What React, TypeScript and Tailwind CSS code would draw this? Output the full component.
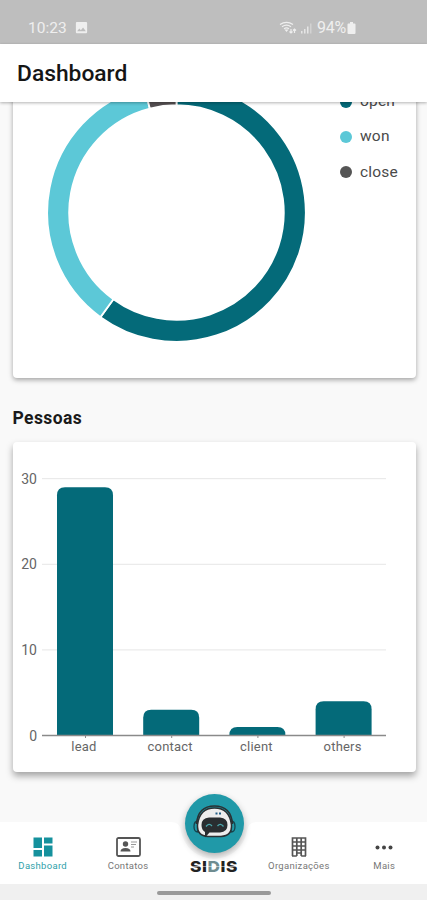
import React from "react";
import { MdImage } from "react-icons/md";

const legend = [
  { label: "open", dot: "bg-[#046a79]" },
  { label: "won", dot: "bg-[#5cc8d7]" },
  { label: "close", dot: "bg-[#555555]" },
];

const slices = [
  { color: "#046a79", from: 0, to: 0.6 },
  { color: "#5cc8d7", from: 0.6, to: 0.96 },
  { color: "#555052", from: 0.96, to: 1 },
];

const people = [
  { label: "lead", value: 29 },
  { label: "contact", value: 3 },
  { label: "client", value: 1 },
  { label: "others", value: 4 },
];

const point = (t: number, r: number) => {
  const a = t * Math.PI * 2;
  return `${129.5 + r * Math.sin(a)} ${129.5 - r * Math.cos(a)}`;
};

const slicePath = (from: number, to: number) => {
  const large = to - from > 0.5 ? 1 : 0;
  return `M${point(from, 129.3)} A129.3 129.3 0 ${large} 1 ${point(to, 129.3)} L${point(to, 107.3)} A107.3 107.3 0 ${large} 0 ${point(from, 107.3)} Z`;
};

const StatusBar = () => (
  <div className="flex h-[44px] shrink-0 items-end justify-between bg-[#bebebe] pr-[71px] pb-[6px] pl-7 text-[#efefef]">
    <div className="flex items-center gap-[7px]">
      <span className="text-[15.5px] leading-5">10:23</span>
      <MdImage size={15} className="-mt-0.5" />
    </div>
    <div className="flex items-center">
      <svg width="18" height="14" viewBox="0 0 18 14" fill="none" stroke="currentColor" strokeWidth="1.2">
        <path d="M1 3.6Q7.500-1 14 3.600M3 5.700Q7.500 2.500 12 5.700M5 7.800Q7.500 6 10 7.800" />
        <path d="M5.500 8.500h4l-2 2.500z" fill="currentColor" stroke="none" />
        <path d="M12 8v4m-1.500-1.500L12 12l1.500-1.500M15.500 12V8M14 9.500 15.500 8 17 9.500" />
      </svg>
      <svg className="ml-[3px]" width="13" height="14" viewBox="0 0 13 14" fill="currentColor">
        <path d="M1 10h1.500v2.500H1zM4 8h1.500v4.500H4zM7 5.500h1.500v7H7z" opacity=".8" />
        <path d="M10 2.500h1.500v10H10z" opacity=".4" />
      </svg>
      <span className="ml-[4px] text-[16px] leading-5 tracking-[-0.2px]">94%</span>
      <svg className="ml-px" width="9" height="13" viewBox="0 0 9 13" fill="currentColor">
        <path d="M3 0h3v1.500h1.500q1 0 1 1V11q0 1-1 1h-6q-1 0-1-1V2.500q0-1 1-1H3z" />
      </svg>
    </div>
  </div>
);

const DonutCard = () => (
  <div className="-mt-[42px] flex h-[318px] w-[403px] shrink-0 rounded-[4px] bg-white pt-[23px] pl-[34px] shadow-[0_2px_5px_rgba(0,0,0,0.35)]">
    <svg width="259" height="259" viewBox="0 0 259 259">
      {slices.map((s) => (
        <path
          key={s.color}
          d={slicePath(s.from, s.to)}
          fill={s.color}
          stroke="#fff"
          strokeWidth="1.8"
        />
      ))}
    </svg>
    <ul className="mt-px ml-[34px] flex flex-col">
      {legend.map((item) => (
        <li key={item.label} className="flex h-[35.300px] items-center gap-2">
          <span className={`size-[12.500px] rounded-full ${item.dot}`}></span>
          <span className="text-[15.500px] tracking-[0.2px] text-[#4a4a4a]">{item.label}</span>
        </li>
      ))}
    </ul>
  </div>
);

const BarCard = () => (
  <div className="mt-[13px] h-[330px] w-[403px] shrink-0 rounded-[4px] bg-white shadow-[0_4px_7px_rgba(0,0,0,0.35)]">
    <svg width="403" height="330" viewBox="0 0 403 330" fontSize="14" fill="#666">
      {[30, 20, 10].map((v) => (
        <g key={v}>
          <path d={`M29 ${293.5 - v * 8.56}H373`} stroke="#e6e6e6" />
          <text x="24" y={298.5 - v * 8.56} textAnchor="end">
            {v}
          </text>
        </g>
      ))}
      <text x="24" y="298.500" textAnchor="end">
        0
      </text>
      {people.map((p, i) => {
        const x = 44 + i * 86.2;
        const top = 293.5 - p.value * 8.56;
        return (
          <g key={p.label}>
            <path
              d={`M${x} 293.500V${top + 8}Q${x} ${top} ${x + 8} ${top}H${x + 48}Q${x + 56} ${top} ${x + 56} ${top + 8}V293.500Z`}
              fill="#046a79"
            />
            <path d={`M${x + 28.5} 294v2`} stroke="#8a8a8a" />
            <text x={x + 27} y="309" textAnchor="middle" fontSize="13" letterSpacing="0.2">
              {p.label}
            </text>
          </g>
        );
      })}
      <path d="M29 293.500H373" stroke="#8a8a8a" strokeWidth="1.300" />
    </svg>
  </div>
);

const DashboardIcon = () => (
  <svg width="20" height="20" viewBox="0 0 20 20" fill="#15919d">
    <path d="M.5.500h8.500v10.500H.500zM11 .5h8.500v6H11zM.500 13H9v6.500H.500zM11 8.500h8.500v11H11z" />
  </svg>
);

const ContactIcon = () => (
  <svg width="25" height="20" viewBox="0 0 25 20" fill="#555">
    <rect x="1" y="1" width="23" height="18" rx="1.500" fill="none" stroke="#555" strokeWidth="1.8" />
    <circle cx="9.500" cy="7" r="2.700" />
    <path d="M4.500 14.500q0-3.500 5-3.500t5 3.500z" />
    <path d="M15 5h6M15 7.500h5M15 10h3" stroke="#999" strokeWidth="1.200" />
  </svg>
);

const BuildingIcon = () => (
  <svg width="16" height="20" viewBox="0 0 16 20" fill="none" stroke="#555" strokeWidth="1.700">
    <path d="M1.500 19V1h13v18M0.800 1h14.400M5.800 1v18M10.200 1v18M1.500 5h13M1.500 9h13M1.500 13h13M1 19h4.800M10.200 19H15M5.800 16h4.400" />
  </svg>
);

const MoreIcon = () => (
  <svg width="18" height="20" viewBox="0 0 18 20" fill="#444">
    <circle cx="2.500" cy="10.500" r="2" />
    <circle cx="9" cy="10.500" r="2" />
    <circle cx="15.500" cy="10.500" r="2" />
  </svg>
);

const NavItem = ({
  icon,
  label,
  active,
}: {
  icon: React.ReactNode;
  label: string;
  active?: boolean;
}) => (
  <button
    className={`flex w-[85.400px] flex-col items-center pt-[15px] ${active ? "text-[#2f9faa]" : "text-[#777]"}`}
  >
    {icon}
    <span className="mt-[3px] text-[9.500px] leading-3 tracking-[0.3px]">{label}</span>
  </button>
);

const BotButton = () => (
  <div className="absolute top-[-28.500px] left-[184.500px] size-[59px] rounded-full bg-[#2099a8] shadow-[0_3px_7px_rgba(0,0,0,0.3)]">
    <svg width="59" height="59" viewBox="0 0 59 59">
      <path d="M13 27q-4 0-4 5.500t4 5.500zM46 27q4 0 4 5.500t-4 5.500z" fill="#2099a8" stroke="#17434c" strokeWidth="1.300" />
      <path d="M11.500 30Q13 12 29.500 12T47.500 30" fill="none" stroke="#2b3033" strokeWidth="1.500" />
      <path d="M12.500 31Q14.500 14 29.500 14T46.500 31Q47 42 36 42.500H23Q12 42 12.500 31z" fill="#ededed" stroke="#2b3033" strokeWidth="1.500" />
      <path d="M16.500 31Q16.500 24 24 23.500H35Q42.500 24 42.500 31T35 38.500H24.500L20 43.500V38Q16.500 36 16.500 31z" fill="#292d30" />
      <path d="M21 32.500Q24 28.500 27 32M32.500 32Q35.500 28.500 38.500 32.500" fill="none" stroke="#4ba6ac" strokeWidth="1.300" />
      <path d="M30.500 19.500h2m1.500 0h2" stroke="#235e86" strokeWidth="2" />
    </svg>
  </div>
);

const BottomNav = () => (
  <nav className="relative flex h-[62px] shrink-0 justify-between">
    <svg className="absolute top-0 left-0 -z-10" width="427" height="62" viewBox="0 0 427 62">
      <path d="M0 0H171Q180 0 181 9A33.500 33.500 0 0 0 247 9Q248 0 257 0H427V62H0Z" fill="#fff" />
    </svg>
    <NavItem icon={<DashboardIcon />} label="Dashboard" active />
    <NavItem icon={<ContactIcon />} label="Contatos" />
    <div className="flex w-[85.400px] items-end justify-center pb-[9px] pl-px">
      <BotButton />
      <div className="relative">
        <span className="block w-[50px] scale-x-[1.15] text-center font-['Inter'] text-[15px] leading-[17px] font-extrabold tracking-[0.5px] text-[#222]">
          SI<span className="text-[#6f8c90]">D</span>IS
        </span>
        <div className="absolute top-[8px] left-0 h-px w-full bg-white/50"></div>
      </div>
    </div>
    <NavItem icon={<BuildingIcon />} label="Organizações" />
    <NavItem icon={<MoreIcon />} label="Mais" />
  </nav>
);

export default function App() {
  return (
    <div className="isolate flex h-[900px] w-[427px] flex-col overflow-hidden bg-[#f9f9f9] font-['Roboto',sans-serif]">
      <StatusBar />
      <header className="z-10 flex h-[58px] shrink-0 items-center bg-white pt-[2px] pl-[17px] shadow-[0_1px_3px_rgba(0,0,0,0.3)]">
        <h1 className="text-[22.800px] font-medium text-[#151515]">Dashboard</h1>
      </header>
      <main className="flex h-[720px] shrink-0 flex-col overflow-hidden pl-[12.500px]">
        <DonutCard />
        <h2 className="mt-[29px] text-[17.500px] leading-[22px] font-bold tracking-[0.4px] text-[#1a1a1a]">
          Pessoas
        </h2>
        <BarCard />
      </main>
      <BottomNav />
      <div className="flex h-4 shrink-0 items-center justify-center bg-[#f0f0f0]">
        <div className="mt-px h-[4px] w-[114px] rounded-full bg-[#999]"></div>
      </div>
    </div>
  );
}
